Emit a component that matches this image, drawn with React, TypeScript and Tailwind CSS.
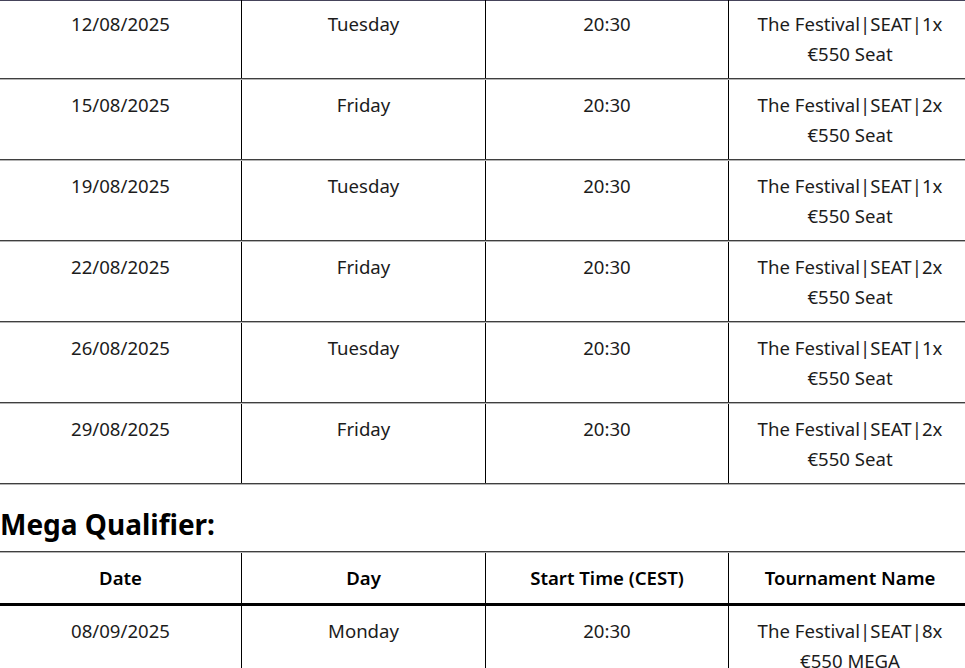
import React from 'react';

type Row = { date: string; day: string; time: string; name: string; prize: string };

const weekly: Row[] = [
  { date: '12/08/2025', day: 'Tuesday', time: '20:30', name: 'The Festival|SEAT|1x', prize: '€550 Seat' },
  { date: '15/08/2025', day: 'Friday', time: '20:30', name: 'The Festival|SEAT|2x', prize: '€550 Seat' },
  { date: '19/08/2025', day: 'Tuesday', time: '20:30', name: 'The Festival|SEAT|1x', prize: '€550 Seat' },
  { date: '22/08/2025', day: 'Friday', time: '20:30', name: 'The Festival|SEAT|2x', prize: '€550 Seat' },
  { date: '26/08/2025', day: 'Tuesday', time: '20:30', name: 'The Festival|SEAT|1x', prize: '€550 Seat' },
  { date: '29/08/2025', day: 'Friday', time: '20:30', name: 'The Festival|SEAT|2x', prize: '€550 Seat' },
];

const mega: Row[] = [
  { date: '08/09/2025', day: 'Monday', time: '20:30', name: 'The Festival|SEAT|8x', prize: '€550 MEGA' },
];

const grid = 'grid grid-cols-[241px_244px_243px_243px]';
const line = 'border-b border-[#3f3f3f] shadow-[0_1px_0_#b4b4b4]';

function DataRow({ r }: { r: Row }) {
  return (
    <div className={`${grid} ${line} mb-px`}>
      <div className="px-2 py-[10px] pb-[9px] text-center">{r.date}</div>
      <div className="border-l border-black px-2 py-[10px] pb-[9px] text-center">{r.day}</div>
      <div className="border-l border-black px-2 py-[10px] pb-[9px] text-center">{r.time}</div>
      <div className="border-l border-black px-2 py-[10px] pb-[9px] text-center">
        {r.name}
        <br />
        {r.prize}
      </div>
    </div>
  );
}

export default function App() {
  return (
    <div className="h-[668px] w-[965px] overflow-hidden bg-white font-['Noto_Sans','Open_Sans',sans-serif] text-[18.6px] leading-[30px] text-[#1c1c1c]">
      <div className="w-[971px]">
        <div className="h-[1px] bg-[#45435a]" />
        <div className="-mt-[2px]">
          {weekly.map((r) => (
            <DataRow key={r.date} r={r} />
          ))}
        </div>

        <h2 className="pt-[21px] pb-[9px] text-[28px] font-bold leading-[36px] text-black">Mega Qualifier:</h2>

        <div className={line + ' mb-px'} />
        <div className={`${grid} border-b-[3px] border-black font-semibold text-black`}>
          <div className="px-2 py-[10px] text-center">Date</div>
          <div className="border-l border-black px-2 py-[10px] text-center">Day</div>
          <div className="border-l border-black px-2 py-[10px] text-center">Start Time (CEST)</div>
          <div className="border-l border-black px-2 py-[10px] text-center">Tournament Name</div>
        </div>
        {mega.map((r) => (
          <DataRow key={r.date} r={r} />
        ))}
      </div>
    </div>
  );
}
